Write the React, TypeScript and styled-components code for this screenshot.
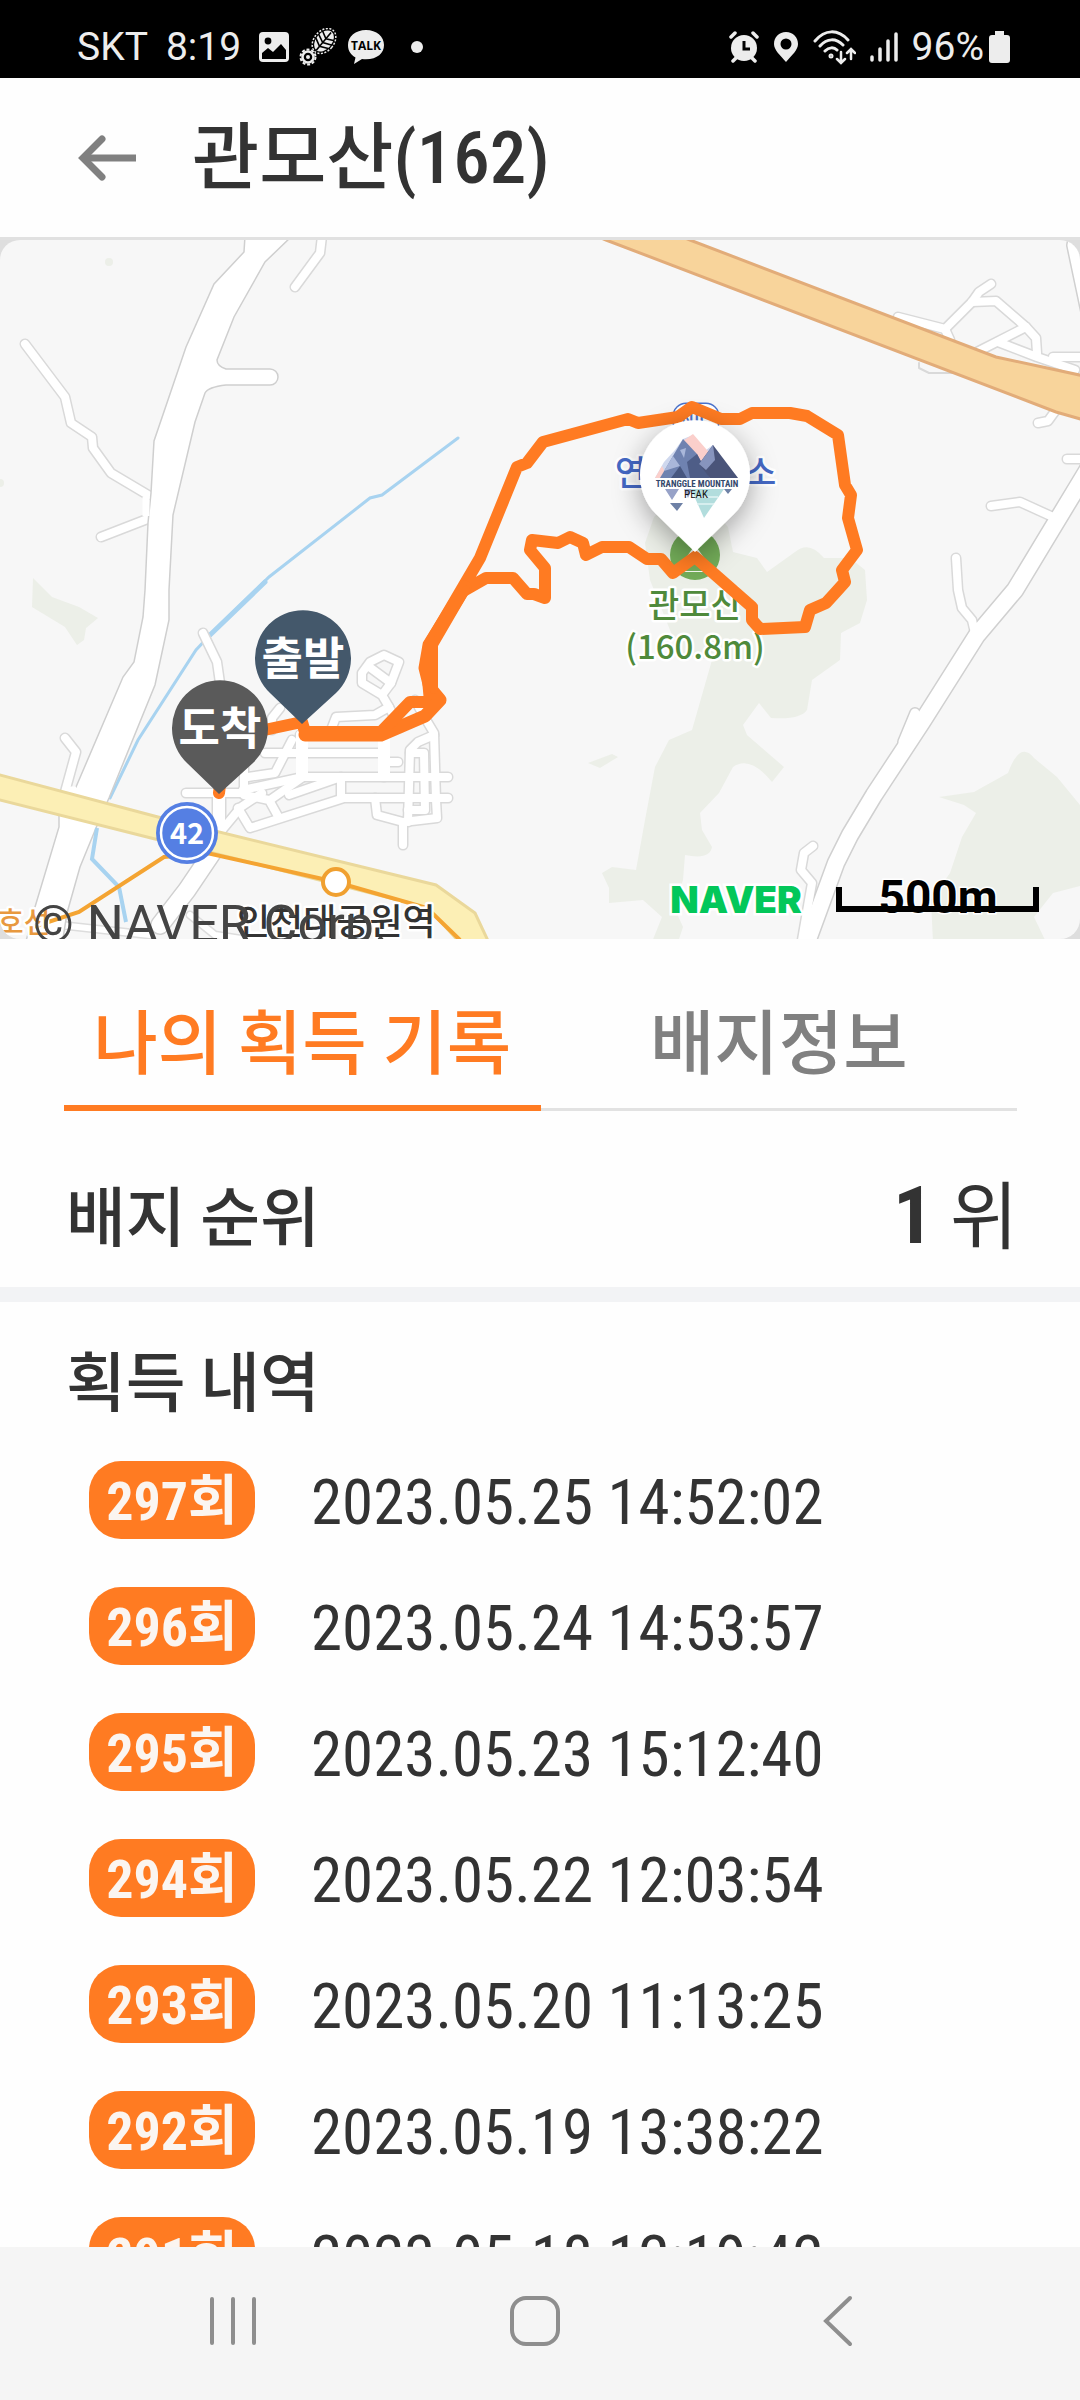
import React from "react";
import styled, { createGlobalStyle } from "styled-components";

const condensed = `"Roboto Condensed", "Liberation Sans Narrow", "Noto Sans CJK KR", sans-serif`;
const hangul = `"Noto Sans CJK KR", sans-serif`;

const GlobalStyle = createGlobalStyle`
  *, *::before, *::after { box-sizing: border-box; }
  body { margin: 0; background: #fff; color: #333; font-family: ${condensed}; }
  button { border: 0; padding: 0; background: none; color: inherit; font: inherit; cursor: pointer; }
  svg { display: block; flex: none; }
`;

const Screen = styled.div`
  display: flex;
  flex-direction: column;
  height: 100vh;
  background: #fefefe;
`;

const StatusBar = styled.div`
  flex: none;
  display: flex;
  align-items: center;
  justify-content: space-between;
  height: 78px;
  padding: 16px 70px 0 77px;
  background: #000;
  color: #ededed;
  font: 400 39px/48px Roboto, sans-serif;
`;

const StatusGroup = styled.div<{ $gap: number }>`
  display: flex;
  align-items: center;
  gap: ${(p) => p.$gap}px;
`;

const Header = styled.header`
  flex: none;
  display: flex;
  align-items: center;
  gap: 55px;
  height: 162px;
  padding: 0 78px;
  border-bottom: 3px solid #e1e1e1;
`;

const Title = styled.h1`
  margin: 0;
  font-size: 73px;
  line-height: 100px;
  font-weight: 500;
`;

const MapPanel = styled.section`
  flex: none;
  background: #dedede;
`;

const MapSvg = styled.svg`
  width: 100%;
  height: auto;
  border-radius: 20px;
  background: #f7f7f7;
`;

const Tabs = styled.div`
  flex: none;
  display: flex;
  margin: 32px 63px 0 64px;
`;

const Tab = styled.button<{ $active?: boolean }>`
  flex: 1;
  height: 140px;
  padding-bottom: 4px;
  color: ${(p) => (p.$active ? "#ff7b22" : "#808080")};
  font: 500 70px/84px ${hangul};
  box-shadow: inset 0 ${(p) => (p.$active ? "-6px #ff7b22" : "-3px #e2e2e2")};
`;

const Rank = styled.section`
  flex: none;
  display: flex;
  align-items: center;
  justify-content: space-between;
  height: 176px;
  padding: 28px 62px 0 66px;
`;

const SectionTitle = styled.h2`
  margin: 0;
  font: 500 65px/84px ${hangul};
`;

const RankValue = styled.p`
  margin: 0;
  font: 400 74px/84px ${hangul};
`;

const RankNumber = styled.strong`
  font-family: ${condensed};
  font-size: 80px;
  font-weight: 700;
`;

const History = styled.section`
  flex: 1;
  min-height: 0;
  overflow: hidden;
  padding: 34px 66px 0;
  border-top: 15px solid #f2f3f5;
`;

const RecordList = styled.ol`
  display: flex;
  flex-direction: column;
  gap: 48px;
  margin: 41px 0 0;
  padding: 0 0 0 23px;
  list-style: none;
`;

const Record = styled.li`
  display: flex;
  align-items: center;
  gap: 56px;
  height: 78px;
`;

const Count = styled.span`
  display: flex;
  align-items: center;
  justify-content: center;
  min-width: 166px;
  height: 78px;
  padding-top: 4px;
  border-radius: 32px;
  background: #ff7b22;
  color: #fbf5f0;
  font-size: 54px;
  line-height: 74px;
  font-weight: 700;
`;

const When = styled.time`
  padding-top: 6px;
  font-size: 63px;
  line-height: 72px;
`;

const NavBar = styled.nav`
  flex: none;
  display: grid;
  grid-template-columns: repeat(3, 1fr);
  height: 153px;
  padding: 0 91px 5px 82px;
  background: #f5f5f5;
`;

const NavButton = styled.button`
  display: flex;
  align-items: center;
  justify-content: center;
`;

const records = [
  { count: 297, at: "2023.05.25 14:52:02" },
  { count: 296, at: "2023.05.24 14:53:57" },
  { count: 295, at: "2023.05.23 15:12:40" },
  { count: 294, at: "2023.05.22 12:03:54" },
  { count: 293, at: "2023.05.20 11:13:25" },
  { count: 292, at: "2023.05.19 13:38:22" },
  { count: 291, at: "2023.05.18 12:19:42" },
];

function NotificationIcons() {
  return (
    <StatusGroup $gap={10}>
      <svg width="30" height="30" viewBox="0 0 30 30">
        <rect width="30" height="30" rx="4" fill="#ededed" />
        <circle cx="9" cy="9" r="3.4" fill="#000" />
        <path d="M3 21 L9 16 L14 20 L22 12 L27 18 V27 H3Z" fill="#000" />
      </svg>
      <svg width="38" height="38" viewBox="0 0 38 38">
        <g transform="rotate(40 25 13)">
          <ellipse cx="25" cy="13" rx="8" ry="12" fill="#ededed" />
          <path d="M25 2V25M17 6l8 4 8-4M16 11l9 4 9-4M17 16l8 4 8-4" fill="none" stroke="#000" strokeWidth="1.6" />
          <ellipse cx="25" cy="13" rx="10" ry="14" fill="none" stroke="#ededed" strokeWidth="1.5" strokeDasharray="2 1.5" />
        </g>
        <circle cx="9" cy="29" r="5.5" fill="none" stroke="#ededed" strokeWidth="2.5" />
        <circle cx="9" cy="29" r="7.5" fill="none" stroke="#ededed" strokeWidth="2" strokeDasharray="3 1.8" />
        <circle cx="9" cy="29" r="2" fill="#ededed" />
      </svg>
      <svg width="38" height="36" viewBox="0 0 38 36">
        <path d="M19 1C8.5 1 1 7.500 1 16c0 6 3 10 7.500 12.500L7 35l8-5c14 1.500 22-5 22-14C37 7.500 29.500 1 19 1Z" fill="#ededed" />
        <text x="19" y="21" textAnchor="middle" fontFamily="Open Sans, sans-serif" fontWeight="700" fontSize="12" fill="#000">TALK</text>
      </svg>
      <svg width="28" height="12" viewBox="0 0 28 12">
        <circle cx="22" cy="6" r="6" fill="#ededed" />
      </svg>
    </StatusGroup>
  );
}

function SystemIcons() {
  return (
    <>
      <svg width="30" height="32" viewBox="0 0 30 32">
        <circle cx="15" cy="17" r="13" fill="#ededed" />
        <path d="M2 6l4-4M28 6l-4-4M4 30l4-4M26 30l-4-4" stroke="#ededed" strokeWidth="3.5" strokeLinecap="round" />
        <path d="M15 10v8h6" fill="none" stroke="#000" strokeWidth="3" />
      </svg>
      <svg width="26" height="32" viewBox="0 0 26 32">
        <path fillRule="evenodd" d="M13 1C6 1 1 6 1 13c0 6 6 11 12 18 6-7 12-12 12-18C25 6 20 1 13 1Zm0 6.500a5.500 5.500 0 1 1 0 11 5.500 5.500 0 0 1 0-11Z" fill="#ededed" />
      </svg>
      <svg width="43" height="36" viewBox="0 0 43 36" fill="none" stroke="#ededed" strokeWidth="3" strokeLinecap="round">
        <path d="M2 12C12 0 25 0 35 11M7 17c7-8 16-8 23-1M12 22c4-4 9-4 12-1" />
        <circle cx="18" cy="27" r="1" />
        <path d="M28 23v10M24 30l4 4 4-4M38 30V21M34 24l4-4 4 4" strokeWidth="2.5" />
      </svg>
      <svg width="28" height="32" viewBox="0 0 28 32" stroke="#ededed" strokeWidth="3.5" strokeLinecap="round">
        <path d="M2 26v3M10 18v11M18 10v19M26 3v26" />
      </svg>
    </>
  );
}

const lanes = [
  "M25 344L65 397L71 423L92 437L93 448L111 473L148 495",
  "M101 537L150 518",
  "M322 236L320 253L295 287",
  "M898 317L945 329L972 302L979 292L991 284",
  "M972 302L996 301L1026 327L1036 338L1037 353",
  "M1026 327L977 352",
  "M998 342L1037 357L1075 370",
  "M1053 357H1084",
  "M945 329L950 340",
  "M1038 423L1048 421L1056 410",
  "M1067 459H1084",
  "M991 506L1020 502L1053 517",
  "M956 558L958 590L962 608L972 620L975 633",
  "M813 846L804 853L801 870L812 883L802 940",
  "M203 633L217 662L221 690",
  "M65 738L76 752L65 792",
];

const village = [
  "M186 793H244",
  "M222 830L241 807L262 793",
  "M238 808L250 828L344 798H448",
  "M243 790L303 777H448",
  "M244 765V795L269 800L279 818",
  "M289 795L341 777V798",
  "M248 777L275 773L292 740",
  "M300 735L303 777L270 800",
  "M265 753H384",
  "M384 733V777",
  "M384 762H398",
  "M331 730L336 717L375 715L389 707L382 695L362 683V673L370 662L384 655L399 662L391 683L382 695",
  "M368 666L391 683",
  "M389 707L400 728",
  "M415 700L422 713L434 733L436 800L437 818L403 822L377 815L375 798",
  "M403 822V845",
  "M408 822L410 750L418 742L434 735",
  "M410 753H424L425 810H408",
  "M272 730V718L280 708",
];

const diagonalRoad = "M1090 466L1015 590L977 635L922 722L874 795L850 835L836 863L806 945";

const route =
  "M219 793L226 738L269 729L302 722L305 732H381L410 702H430L427 668L429 645L463 587L480 558L517 467L527 463L543 442L628 419L638 423L678 417L692 407L721 419H740L752 413H790L807 416L838 435L845 485L851 495L848 518L857 550L842 570L845 582L836 592L826 603L810 610L805 627L760 629L752 620V607L695 557L673 573L661 559H647L629 547H602L586 555L583 543L570 537L558 543L532 540L530 550L545 568V598L534 594L527 594L513 578H486L465 590";

function CourseMap() {
  return (
    <MapSvg viewBox="0 240 1080 699" role="img" aria-label="관모산 코스 지도">
      <defs>
        <filter id="pinShadow" x="-50%" y="-50%" width="200%" height="200%">
          <feDropShadow dx="0" dy="8" stdDeviation="14" floodColor="#000" floodOpacity="0.34" />
        </filter>
      </defs>
      <g fill="#ecefe8">
        <path d="M654 517Q690 480 728 527L733 552L757 558L767 572L795 552Q809 540 824 558H850L865 570L867 600L860 623L841 633L840 660L812 680L807 710Q800 720 771 718L759 703L743 725L747 735L784 767L772 782Q750 755 733 767L719 793L700 813L702 830L712 847Q710 860 685 855L683 880L674 907L683 927L678 942H652L662 917L643 900L609 903V888L602 873L612 867L636 870L645 820L655 767L669 740L692 730L712 660L680 655L650 580L645 543Z" />
        <path d="M588 763L596 760L612 754L618 757L600 768Z" />
        <path d="M939 797L974 792L1008 773Q1020 740 1034 758L1057 777L1084 810V885L1053 893L1034 917L1046 942H933L931 900L950 873L962 837L976 813L964 805Z" />
        <path d="M33 578L32 607L65 627L77 645L84 640L86 628L98 618L79 607L52 597Z" />
        <circle cx="109" cy="262" r="4" />
        <circle cx="0" cy="483" r="4" />
      </g>
      <g fill="none" stroke="#a8d3f0" strokeLinecap="round">
        <path d="M458 438L382 495L370 498L269 577L210 635" strokeWidth="3" />
        <path d="M265 582L210 635" strokeWidth="5" />
        <path d="M210 635L196 650L138 740L110 798" strokeWidth="3" />
      </g>
      <g fill="none" strokeLinecap="round" strokeLinejoin="round">
        {[...lanes, ...village].map((d) => <path key={d} d={d} stroke="#d9d9d9" strokeWidth="11" />)}
        <path d={diagonalRoad} stroke="#d0d0d0" strokeWidth="19" />
        <path d="M915 713L903 742" stroke="#d0d0d0" strokeWidth="12" />
        <path d="M214 850L187 890L160 925M1076 245L1094 330" stroke="#d0d0d0" strokeWidth="20" />
        <path d="M190 915L215 935L260 942M60 925L150 935" stroke="#ddd" strokeWidth="9" />
        <path d="M219 797V834" stroke="#d9d9d9" strokeWidth="15" />
        {[...lanes, ...village].map((d) => <path key={d} d={d} stroke="#fff" strokeWidth="8" />)}
        <path d="M190 915L215 935L260 942M60 925L150 935" stroke="#fff" strokeWidth="6" />
        <path d={diagonalRoad} stroke="#fff" strokeWidth="16" />
        <path d="M915 713L903 742" stroke="#fff" strokeWidth="9" />
        <path d="M214 850L187 890L160 925M1076 245L1094 330" stroke="#fff" strokeWidth="17" />
        <path d="M219 797V834M384 733V775M302 735V775" stroke="#fff" strokeWidth="12" />
        <path d="M919 363V368L929 373H953" stroke="#d9d9d9" strokeWidth="2" />
      </g>
      <path d="M245 236L244 252L214 284L186 347L154 441L151 493L148 523L145 590L143 617L134 662L123 677L76 787L59 813V827L35 907L25 945H62L67 913L80 867L96 828L109 798L155 685L169 620V590L173 515L195 422L205 393Q208 387 226 385H270A8 8 0 0 0 270 369H226Q217 366 217 360L234 317L265 262L292 236Z" fill="#fff" stroke="#cfcfcf" strokeWidth="1.5" />
      <path d="M64 790H76M146 497V516" stroke="#fff" strokeWidth="7" />
      <path d="M97 828L92 859L119 887L126 922" fill="none" stroke="#a8d3f0" strokeWidth="4" />
      <path d="M596 236L606 240L1056 412L1084 420V376L996 357L690 240L680 236Z" fill="#f8d49b" stroke="#e2ac79" strokeWidth="3" />
      <path d="M-4 774L158 817L436 885L475 913L490 945H462L430 910L410 903L213 853L155 839L-4 799Z" fill="#fcefb5" stroke="#ead89b" strokeWidth="3" />
      <path d="M460 940L427 908L336 882L207 853L164 857L79 912L30 928" fill="none" stroke="#f4a432" strokeWidth="4" />
      <circle cx="336" cy="882" r="13" fill="#fff" stroke="#f0a030" strokeWidth="4" />
      <g>
        <circle cx="187" cy="833" r="31" fill="#557fe3" />
        <circle cx="187" cy="833" r="26" fill="none" stroke="#fff" strokeWidth="2.5" />
        <text x="187" y="844" textAnchor="middle" fontFamily={hangul} fontWeight="700" fontSize="29" fill="#fff">42</text>
      </g>
      <g fontFamily={hangul} fontWeight="500" stroke="#fff" strokeWidth="5" strokeLinejoin="round" paintOrder="stroke">
        <text x="-3" y="933" fontSize="29" fill="#e8993f">호선</text>
        <text x="237" y="935" fontSize="36" fill="#333">인천대공원역</text>
        <text x="615" y="485" fontSize="34" fill="#4468c4">연</text>
        <text x="745" y="485" fontSize="34" fill="#4468c4">소</text>
        <rect x="674" y="404" width="44" height="30" rx="12" strokeWidth="3" stroke="#4a72cc" fill="#fff" />
        <text x="696" y="426" fontSize="18" textAnchor="middle" strokeWidth="0" fill="#4a72cc">NIC</text>
      </g>
      <circle cx="695" cy="555" r="25" fill="#72ab58" />
      <path d="M676 572L695 545L714 572Z" fill="#f4f7f0" />
      <path d="M684 571H706L695 560Z" fill="#72ab58" />
      <g fontFamily={hangul} fontWeight="500" stroke="#fff" strokeWidth="5" strokeLinejoin="round" paintOrder="stroke" fill="#4f8a3b" textAnchor="middle">
        <text x="695" y="617" fontSize="34">관모산</text>
        <text x="695" y="659" fontSize="33">(160.8m)</text>
      </g>
      <g fill="none" stroke="#ff7b22" strokeLinejoin="round" strokeLinecap="round">
        <path d={route} strokeWidth="12" />
        <path d="M305 735H381L425 716L440 700L430 688L425 668L429 645L465 587" strokeWidth="13" />
        <path d="M434 690V645L466 590M390 726L410 704" strokeWidth="8" />
      </g>
      <g filter="url(#pinShadow)">
        <path d="M695 552L656 514A55 55 0 1 1 734 514Z" fill="#fff" />
      </g>
      <g>
        <path d="M655 478L664 462L675 450L683 439L693 435L706 450L713 445L722 458L738 478Z" fill="#cfd8ee" />
        <path d="M683 441L693 434L713 457L707 468Z" fill="#fbcfcb" />
        <path d="M655 478L662 466L668 478Z" fill="#fbcfcb" />
        <path d="M660 478L683 439L697 454L710 478Z" fill="#6f82b0" />
        <path d="M683 439L697 454L687 462L690 478H710L697 454Z" fill="#4e5d87" />
        <path d="M699 464L713 445L738 478H710Z" fill="#4a5479" />
        <path d="M699 464L713 445L715 460L706 470Z" fill="#8794bd" />
        <path d="M664 471L673 456L680 466ZM680 450L686 448L684 458Z" fill="#a9b7da" />
        <path d="M671 478L680 466L687 478Z" fill="#475780" />
        <path d="M665 489H679L672 500ZM684 489H692L688 498Z" fill="#97a2c8" />
        <path d="M670 503H683L677 511ZM724 489H732L728 494Z" fill="#6e81a6" />
        <path d="M691 489H724L704 518Z" fill="#b2dddd" />
        <path d="M693 497H718M697 504H714" stroke="#e2f4f4" strokeWidth="1.5" />
        <text x="697" y="487" textAnchor="middle" fontFamily={condensed} fontWeight="700" fontSize="9" fill="#34496b">TRANGGLE MOUNTAIN</text>
        <text x="696" y="498" textAnchor="middle" fontFamily={condensed} fontSize="11" fill="#111">PEAK</text>
      </g>
      <path d="M302 724L270 693A48 48 0 1 1 336 693Z" fill="#44586b" />
      <path d="M219 794L187 763A48 48 0 1 1 253 763Z" fill="#5a5a5a" />
      <g fontFamily={hangul} fontWeight="700" fontSize="45" fill="#fff" textAnchor="middle">
        <text x="303" y="675">출발</text>
        <text x="220" y="745">도착</text>
      </g>
      <text x="33" y="942" fontFamily="Roboto, sans-serif" fontSize="52" fill="#444">© NAVER Corp.</text>
      <text x="736" y="913" textAnchor="middle" fontFamily="Inter, sans-serif" fontWeight="900" fontSize="37" fill="#03c75a" stroke="#fff" strokeWidth="5" paintOrder="stroke">NAVER</text>
      <text x="938" y="913" textAnchor="middle" fontFamily="Roboto, sans-serif" fontWeight="700" fontSize="46" fill="#000" stroke="#fff" strokeWidth="3" paintOrder="stroke">500m</text>
      <path d="M839 887V909H1036V887" fill="none" stroke="#000" strokeWidth="6" />
    </MapSvg>
  );
}

export default function App() {
  return (
    <Screen>
      <GlobalStyle />
      <StatusBar>
        <StatusGroup $gap={18}>
          <span>SKT</span>
          <span>8:19</span>
          <NotificationIcons />
        </StatusGroup>
        <StatusGroup $gap={14}>
          <SystemIcons />
          <StatusGroup $gap={5}>
            <span>96%</span>
            <svg width="21" height="32" viewBox="0 0 21 32">
              <path d="M6 0h9v4h3q3 0 3 3v22q0 3-3 3H3q-3 0-3-3V7q0-3 3-3h3Z" fill="#ededed" />
            </svg>
          </StatusGroup>
        </StatusGroup>
      </StatusBar>
      <Header>
        <button type="button" aria-label="뒤로">
          <svg width="59" height="48" viewBox="0 0 59 48" fill="none" stroke="#808080" strokeWidth="7" strokeLinecap="round">
            <path d="M24 5L5 24L24 43" />
            <path d="M6 24H58" strokeLinecap="butt" />
          </svg>
        </button>
        <Title>관모산(162)</Title>
      </Header>
      <MapPanel>
        <CourseMap />
      </MapPanel>
      <Tabs role="tablist">
        <Tab type="button" role="tab" aria-selected="true" $active>나의 획득 기록</Tab>
        <Tab type="button" role="tab" aria-selected="false">배지정보</Tab>
      </Tabs>
      <Rank>
        <SectionTitle>배지 순위</SectionTitle>
        <RankValue><RankNumber>1</RankNumber> 위</RankValue>
      </Rank>
      <History>
        <SectionTitle>획득 내역</SectionTitle>
        <RecordList>
          {records.map((r) => (
            <Record key={r.count}>
              <Count>{r.count}회</Count>
              <When>{r.at}</When>
            </Record>
          ))}
        </RecordList>
      </History>
      <NavBar>
        <NavButton type="button" aria-label="최근 앱">
          <svg width="48" height="50" viewBox="0 0 48 50" stroke="#8e8e8e" strokeWidth="4" strokeLinecap="round">
            <path d="M3 3V47M24 3V47M45 3V47" />
          </svg>
        </NavButton>
        <NavButton type="button" aria-label="홈">
          <svg width="50" height="50" viewBox="0 0 50 50" fill="none" stroke="#8e8e8e" strokeWidth="4">
            <rect x="2" y="2" width="46" height="46" rx="14" />
          </svg>
        </NavButton>
        <NavButton type="button" aria-label="이전">
          <svg width="30" height="52" viewBox="0 0 30 52" fill="none" stroke="#8e8e8e" strokeWidth="4" strokeLinecap="round">
            <path d="M27 3L3 26L27 49" />
          </svg>
        </NavButton>
      </NavBar>
    </Screen>
  );
}
